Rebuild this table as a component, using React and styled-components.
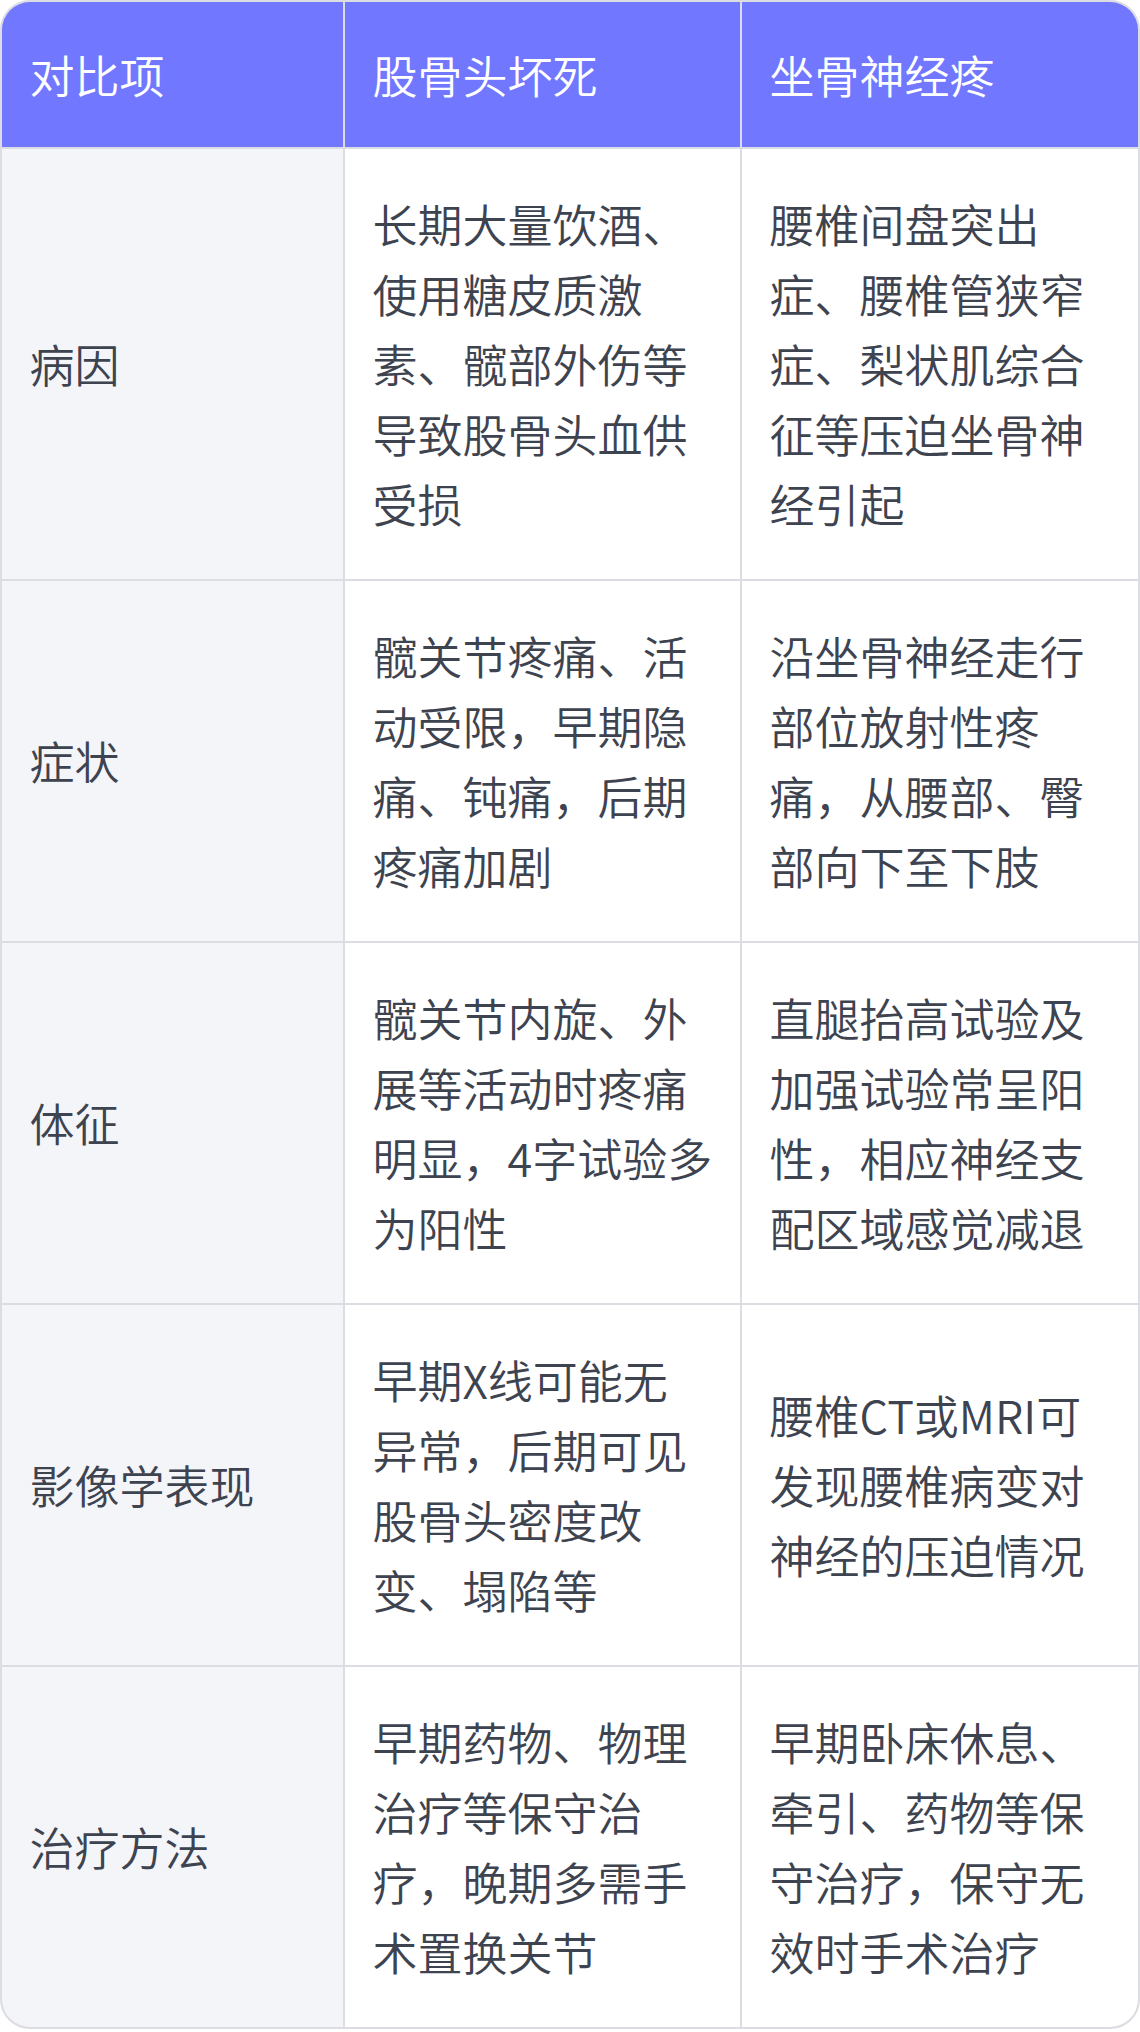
import React from "react";
import styled, { createGlobalStyle } from "styled-components";

const GlobalStyle = createGlobalStyle`
  html, body {
    margin: 0;
    padding: 0;
    background: #ffffff;
  }
  body {
    font-family: "Noto Sans CJK SC", "Noto Sans", sans-serif;
  }
`;

const TableWrap = styled.div`
  width: 1140px;
  box-sizing: border-box;
  border: 2px solid #dcdde3;
  border-radius: 30px;
  overflow: hidden;
  display: grid;
  grid-template-columns: 341px 395px 1fr;
  gap: 2px;
  background: #dcdde3;
`;

const HeadCell = styled.div`
  display: flex;
  align-items: center;
  padding: 37.5px 27.5px;
  background: #7177ff;
  color: #ffffff;
  font-size: 45px;
  font-weight: 350;
  line-height: 70px;
`;

const Cell = styled.div`
  display: flex;
  align-items: center;
  padding: 40px 27.5px;
  background: ${(p) => (p.$label ? "#f4f5f9" : "#ffffff")};
  color: #3e4350;
  font-size: 45px;
  font-weight: 350;
  line-height: 70px;
  word-break: break-all;
`;

const headers = ["对比项", "股骨头坏死", "坐骨神经疼"];

const rows = [
  [
    "病因",
    "长期大量饮酒、使用糖皮质激素、髋部外伤等导致股骨头血供受损",
    "腰椎间盘突出症、腰椎管狭窄症、梨状肌综合征等压迫坐骨神经引起",
  ],
  [
    "症状",
    "髋关节疼痛、活动受限，早期隐痛、钝痛，后期疼痛加剧",
    "沿坐骨神经走行部位放射性疼痛，从腰部、臀部向下至下肢",
  ],
  [
    "体征",
    "髋关节内旋、外展等活动时疼痛明显，4字试验多为阳性",
    "直腿抬高试验及加强试验常呈阳性，相应神经支配区域感觉减退",
  ],
  [
    "影像学表现",
    "早期X线可能无异常，后期可见股骨头密度改变、塌陷等",
    "腰椎CT或MRI可发现腰椎病变对神经的压迫情况",
  ],
  [
    "治疗方法",
    "早期药物、物理治疗等保守治疗，晚期多需手术置换关节",
    "早期卧床休息、牵引、药物等保守治疗，保守无效时手术治疗",
  ],
];

export default function App() {
  return (
    <>
      <GlobalStyle />
      <TableWrap>
        {headers.map((h) => (
          <HeadCell key={h}>{h}</HeadCell>
        ))}
        {rows.map((row) =>
          row.map((text, i) => (
            <Cell key={row[0] + i} $label={i === 0}>
              {text}
            </Cell>
          ))
        )}
      </TableWrap>
    </>
  );
}
